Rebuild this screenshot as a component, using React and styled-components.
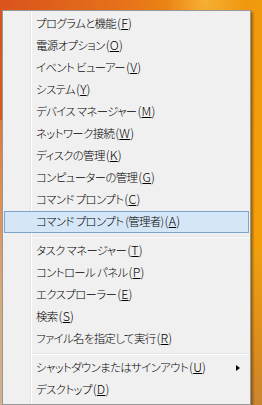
import React from "react";
import styled, { createGlobalStyle } from "styled-components";

const Global = createGlobalStyle`
  html, body { margin: 0; padding: 0; }
  body { width: 262px; height: 405px; overflow: hidden; }
`;

const Desktop = styled.div`
  width: 262px;
  height: 405px;
  box-sizing: border-box;
  padding: 10px 11px 0 2px;
  background:
    radial-gradient(ellipse 40px 60px at 205px 0px, rgba(255, 200, 80, 0.55), rgba(255, 200, 80, 0) 100%),
    linear-gradient(100deg, #d9531c 0%, #e6701a 35%, #ef9410 65%, #f3a408 100%);
  position: relative;
  &::before {
    content: "";
    position: absolute;
    left: 0;
    top: 120px;
    width: 3px;
    bottom: 0;
    background: linear-gradient(180deg, #e0793a, #d9a878 60%, #d3b38a);
  }
  &::after {
    content: "";
    position: absolute;
    right: 0;
    top: 250px;
    width: 11px;
    bottom: 0;
    background: linear-gradient(180deg, #f0a010, #d88b20 70%, #c98530);
  }
`;

const Menu = styled.div`
  position: relative;
  z-index: 1;
  width: 249px;
  box-sizing: border-box;
  background: #f0f0f0;
  border: 1px solid #979797;
  padding: 2px 1px 3px 1px;
  box-shadow: 2px 2px 2px rgba(60, 30, 0, 0.45);
  font-family: "Noto Sans CJK JP", "Noto Sans", sans-serif;
  font-size: 11.4px;
  font-weight: 300;
  letter-spacing: -0.6px;
  font-feature-settings: "palt";
  color: #000;
  &::before {
    content: "";
    position: absolute;
    top: 0;
    bottom: 0;
    left: 27px;
    width: 1px;
    background: #e2e3e3;
    box-shadow: 1px 0 0 #ffffff;
  }
`;

const Item = styled.div`
  position: relative;
  height: 22px;
  box-sizing: border-box;
  display: flex;
  align-items: center;
  padding-left: 31px;
  border: 1px solid ${(p) => (p.$active ? "#7da2ce" : "transparent")};
  background: ${(p) => (p.$active ? "#d5e6f7" : "transparent")};
  white-space: nowrap;
  line-height: 20px;
`;

const Label = styled.span`
  position: relative;
  top: -1px;
`;

const Key = styled.span`
  font-size: 12.4px;
  letter-spacing: 0.2px;
  margin-left: 1px;
  u { text-decoration: underline; text-underline-offset: 1px; }
`;

const Separator = styled.div`
  height: 7px;
  display: flex;
  align-items: center;
  padding-left: 27px;
  &::after {
    content: "";
    flex: 1;
    height: 1px;
    background: #e2e3e3;
    border-bottom: 1px solid #ffffff;
  }
`;

const Arrow = styled.span`
  position: absolute;
  right: 8px;
  top: 7px;
  width: 0;
  height: 0;
  border-top: 3.5px solid transparent;
  border-bottom: 3.5px solid transparent;
  border-left: 4px solid #000;
`;

const groups = [
  [
    ["プログラムと機能", "F"],
    ["電源オプション", "O"],
    ["イベント ビューアー", "V"],
    ["システム", "Y"],
    ["デバイス マネージャー", "M"],
    ["ネットワーク接続", "W"],
    ["ディスクの管理", "K"],
    ["コンピューターの管理", "G"],
    ["コマンド プロンプト", "C"],
    ["コマンド プロンプト (管理者)", "A", true],
  ],
  [
    ["タスク マネージャー", "T"],
    ["コントロール パネル", "P"],
    ["エクスプローラー", "E"],
    ["検索", "S"],
    ["ファイル名を指定して実行", "R"],
  ],
  [
    ["シャットダウンまたはサインアウト", "U", false, true],
    ["デスクトップ", "D"],
  ],
];

export default function App() {
  return (
    <>
      <Global />
      <Desktop>
        <Menu>
          {groups.map((g, gi) => (
            <React.Fragment key={gi}>
              {gi > 0 && <Separator />}
              {g.map(([label, key, active, sub]) => (
                <Item key={label} $active={active}>
                  <Label>
                    {label}
                    <Key>
                      (<u>{key}</u>)
                    </Key>
                  </Label>
                  {sub && <Arrow />}
                </Item>
              ))}
            </React.Fragment>
          ))}
        </Menu>
      </Desktop>
    </>
  );
}
